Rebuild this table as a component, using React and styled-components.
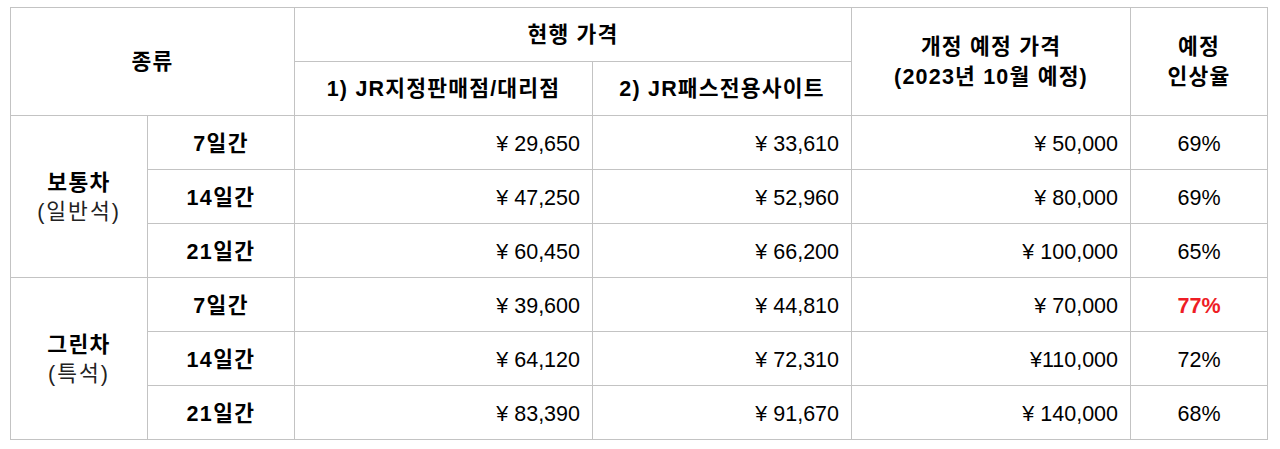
import React from 'react';
import styled, { createGlobalStyle } from 'styled-components';

const GlobalStyle = createGlobalStyle`
  body {
    margin: 0;
    background: #ffffff;
    font-family: "Liberation Sans", Arial, "Noto Sans CJK KR", sans-serif;
    color: #000;
  }
`;

const widths = [137, 147, 298, 259, 279, 137];

const groups = [
  {
    name: '보통차',
    sub: '(일반석)',
    rows: [
      ['7일간', '¥ 29,650', '¥ 33,610', '¥ 50,000', '69%'],
      ['14일간', '¥ 47,250', '¥ 52,960', '¥ 80,000', '69%'],
      ['21일간', '¥ 60,450', '¥ 66,200', '¥ 100,000', '65%'],
    ],
  },
  {
    name: '그린차',
    sub: '(특석)',
    rows: [
      ['7일간', '¥ 39,600', '¥ 44,810', '¥ 70,000', '77%', true],
      ['14일간', '¥ 64,120', '¥ 72,310', '¥110,000', '72%'],
      ['21일간', '¥ 83,390', '¥ 91,670', '¥ 140,000', '68%'],
    ],
  },
];

export default function App() {
  return (
    <Page>
      <GlobalStyle />
      <Table>
        <colgroup>
          {widths.map((w, i) => <col key={i} style={{ width: w }} />)}
        </colgroup>
        <thead>
          <Row>
            <Head colSpan={2} rowSpan={2}>종류</Head>
            <Head colSpan={2}>현행 가격</Head>
            <Head rowSpan={2}>개정 예정 가격<br />(2023년 10월 예정)</Head>
            <Head rowSpan={2}>예정<br />인상율</Head>
          </Row>
          <Row>
            <Head>1) JR지정판매점/대리점</Head>
            <Head>2) JR패스전용사이트</Head>
          </Row>
        </thead>
        <tbody>
          {groups.map(g =>
            g.rows.map((r, i) => (
              <Row key={g.name + i}>
                {i === 0 && (
                  <Cell rowSpan={3}>
                    <Kind>{g.name}</Kind>
                    <Sub>{g.sub}</Sub>
                  </Cell>
                )}
                <Day>{r[0]}</Day>
                <Price>{r[1]}</Price>
                <Price>{r[2]}</Price>
                <Price>{r[3]}</Price>
                <Cell $red={r[5]}>{r[4]}</Cell>
              </Row>
            ))
          )}
        </tbody>
      </Table>
    </Page>
  );
}

const Page = styled.div`
  padding: 7px 0 0 10px;
`;

const Table = styled.table`
  border-collapse: collapse;
  table-layout: fixed;
  width: 1258px;
  font-size: 21.5px;
`;

const Row = styled.tr`
  height: 54px;
`;

const Head = styled.th`
  border: 1px solid #c3c3c3;
  font-weight: bold;
  text-align: center;
  vertical-align: middle;
  line-height: 30px;
  letter-spacing: 1.2px;
  padding: 0 4px;
`;

const Cell = styled.td`
  border: 1px solid #c3c3c3;
  text-align: center;
  vertical-align: middle;
  padding: 3px 6px 0;
  line-height: 29px;
  font-weight: ${p => (p.$red ? 'bold' : 'normal')};
  color: ${p => (p.$red ? '#ee1d25' : '#000')};
`;

const Day = styled(Cell)`
  font-weight: bold;
  letter-spacing: 1.4px;
`;

const Price = styled(Cell)`
  text-align: right;
  padding-right: 12px;
`;

const Kind = styled.div`
  font-weight: bold;
  letter-spacing: 1.4px;
`;

const Sub = styled.div`
  font-weight: normal;
  letter-spacing: 2px;
  color: #222;
`;
